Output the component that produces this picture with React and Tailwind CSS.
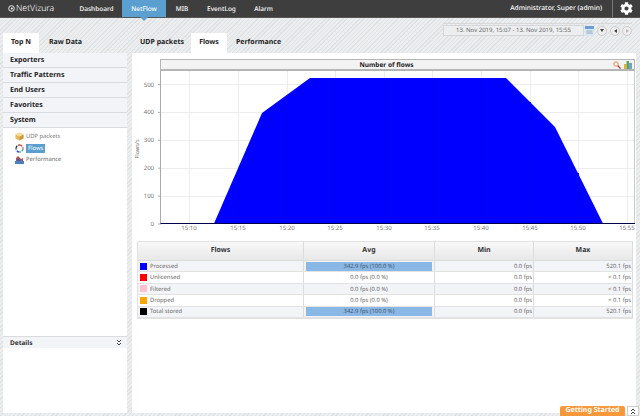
import React from "react";
import { FaCog } from "react-icons/fa";

const stripes = "bg-[repeating-linear-gradient(135deg,#dfe3e6_0,#dfe3e6_1px,#ebedef_1px,#ebedef_3px)]";

function NavItem({ label, active, className }) {
  return (
    <div className={`relative h-full flex items-center justify-center whitespace-nowrap text-[6.5px] font-medium text-white ${active ? "bg-[#5a9fd0]" : ""} ${className}`}>
      {label}
      {active && <div className="absolute left-1/2 top-full -ml-[4px] w-0 h-0 border-x-[4px] border-x-transparent border-t-[4px] border-t-[#5a9fd0]" />}
    </div>
  );
}

function Tab({ label, active, className }) {
  return (
    <div className={`h-[20px] flex items-center justify-center whitespace-nowrap text-[7px] font-bold text-[#222] ${active ? "bg-white" : ""} ${className}`}>
      {label}
    </div>
  );
}

function Acc({ label }) {
  return (
    <div className="h-[15px] flex items-center pl-[7px] bg-[#f3f4f8] border-b border-[#d9dbde] whitespace-nowrap text-[7.1px] font-bold text-[#222]">
      {label}
    </div>
  );
}

function Chart() {
  const ys = [84, 112, 140, 168, 196];
  const xs = [189, 238, 287, 335, 384, 432, 481, 530, 578, 627];
  const xl = ["15:10", "15:15", "15:20", "15:25", "15:30", "15:35", "15:40", "15:45", "15:50", "15:55"];
  const inner = [[238, 168], [287, 95], [335, 78], [384, 78], [432, 78], [481, 78], [530, 102], [578, 173]];
  return (
    <svg width="508" height="168" viewBox="132 71 508 168" className="block">
      {ys.map((y) => <line key={y} x1="160" x2="634" y1={y + 0.5} y2={y + 0.5} stroke="#ececec" />)}
      {xs.map((x) => <line key={x} x1={x + 0.5} x2={x + 0.5} y1="71" y2="223" stroke="#ececec" />)}
      <polygon points="214,223.500 262,113 310,78 506,78 555,127 603,223.500" fill="#0000ff" />
      {inner.map(([x, y]) => <line key={x} x1={x + 0.5} x2={x + 0.5} y1={y} y2="223" stroke="#0000ee" />)}
      <line x1="160.500" x2="160.500" y1="71" y2="224" stroke="#aaa" />
      <line x1="634.500" x2="634.500" y1="71" y2="224" stroke="#ccc" />
      <line x1="160" x2="635" y1="223.500" y2="223.500" stroke="#00004a" />
      {[500, 400, 300, 200, 100, 0].map((v, i) => (
        <g key={v}>
          <line x1="158" x2="161" y1={84.5 + i * 27.9} y2={84.5 + i * 27.9} stroke="#aaa" />
          <text x="154" y={86.5 + i * 27.9} textAnchor="end" fontSize="6" fill="#777">{v}</text>
        </g>
      ))}
      {xs.map((x, i) => (
        <text key={x} x={x} y="230" textAnchor="middle" fontSize="6" fill="#777">{xl[i]}</text>
      ))}
      <text x="139" y="149" fontSize="5.5" fill="#777" textAnchor="middle" transform="rotate(-90 139 149)">Flows/s</text>
    </svg>
  );
}

const rows = [
  ["#0000ff", "Processed", "342.9 fps (100.0 %)", "0.0 fps", "520.1 fps", true],
  ["#ff0000", "Unlicensed", "0.0 fps (0.0 %)", "0.0 fps", "< 0.1 fps", false],
  ["#ffc0cb", "Filtered", "0.0 fps (0.0 %)", "0.0 fps", "< 0.1 fps", false],
  ["#ffa500", "Dropped", "0.0 fps (0.0 %)", "0.0 fps", "< 0.1 fps", false],
  ["#000000", "Total stored", "342.9 fps (100.0 %)", "0.0 fps", "520.1 fps", true],
];

function Header({ children, className }) {
  return (
    <div className={`flex items-center justify-center bg-gradient-to-b from-[#f8f8f8] to-[#e8e8e8] border-r border-[#dcdcdc] text-[7px] font-bold text-[#333] ${className}`}>
      {children}
    </div>
  );
}

function Table() {
  return (
    <div className="ml-[5px] mt-[2px] w-[496px] border border-[#e2e2e2] border-r-0 text-[5.8px] text-[#666]">
      <div className="flex h-[19px] border-b border-[#dcdcdc]">
        <Header className="w-[166px]">Flows</Header>
        <Header className="w-[131px]">Avg</Header>
        <Header className="w-[99px]">Min</Header>
        <Header className="w-[99px]">Max</Header>
      </div>
      {rows.map(([c, n, avg, min, max, bar], i) => (
        <div key={n} className={`flex h-[11.4px] border-b border-[#e2e2e2] ${i % 2 === 0 ? "bg-[#f3f4f8]" : "bg-white"}`}>
          <div className="w-[166px] flex items-center border-r border-[#dcdcdc] pl-[2px] gap-[3px]">
            <div className="w-[7px] h-[7px]" style={{ background: c }} />
            <span>{n}</span>
          </div>
          <div className="w-[131px] flex items-center border-r border-[#dcdcdc] px-[2px]">
            <div className={`w-full h-[9px] flex items-center justify-center ${bar ? "bg-[#8ab8e6] text-[#456]" : ""}`}>{avg}</div>
          </div>
          <div className="w-[99px] flex items-center justify-end pr-[1px] border-r border-[#dcdcdc]">{min}</div>
          <div className="w-[99px] flex items-center justify-end pr-[1px] border-r border-[#dcdcdc]">{max}</div>
        </div>
      ))}
    </div>
  );
}

export default function App() {
  return (
    <div className={`w-[640px] h-[416px] overflow-hidden flex flex-col [text-rendering:geometricPrecision] font-['Liberation_Sans',Arial,sans-serif] ${stripes}`}>
      <div className="h-[17px] bg-[#3e3e3e] flex items-center text-white border-b border-[#555] box-content">
        <div className="w-[80px] pl-[8px] flex items-center gap-[1px] h-full">
          <svg width="7" height="7" viewBox="0 0 7 7"><circle cx="3.500" cy="3.500" r="2.800" fill="none" stroke="#fff" strokeWidth="0.9" /><circle cx="3.800" cy="3.500" r="1" fill="#fff" /></svg>
          <span className="text-[8.7px] font-['Open_Sans',sans-serif] font-light">NetVizura</span>
        </div>
        <NavItem label="Dashboard" className="w-[33px]" />
        <NavItem label="NetFlow" active className="ml-[9px] w-[44px]" />
        <NavItem label="MIB" className="ml-[10px] w-[12px]" />
        <NavItem label="EventLog" className="ml-[19px] w-[29px]" />
        <NavItem label="Alarm" className="ml-[18px] w-[19px]" />
        <div className="ml-auto text-[6.7px] font-medium whitespace-nowrap">Administrator, Super (admin)</div>
        <div className="ml-[10px] h-full w-[28px] border-l border-[#777] flex items-center justify-center">
          <FaCog className="w-[13px] h-[13px] text-white" />
        </div>
      </div>

      <div className="relative flex-1 flex min-h-0">
        <div className="ml-[3px] w-[124px] flex flex-col">
          <div className="mt-[15px] flex">
            <Tab label="Top N" active className="w-[36px]" />
            <Tab label="Raw Data" className="ml-[10px] w-[33px]" />
          </div>
          <div className="flex-1 mb-[3px] bg-white flex flex-col">
            <Acc label="Exporters" />
            <Acc label="Traffic Patterns" />
            <Acc label="End Users" />
            <Acc label="Favorites" />
            <Acc label="System" />
            <div className="pl-[12px] pt-[3px] flex flex-col text-[5.8px] text-[#666]">
              <div className="h-[11.5px] flex items-center gap-[2px]">
                <svg width="9" height="9" viewBox="0 0 9 9"><path d="M4.500.5 8.500 2.500v4l-4 2-4-2v-4z" fill="#e8b860" /><path d="M4.500 4.500 8.500 2.500v4l-4 2z" fill="#d09a3a" /><path d="M.5 2.500l4-2 4 2-4 2z" fill="#f6dca0" /></svg>
                <span className="text-[#777]">UDP packets</span>
              </div>
              <div className="h-[11.5px] flex items-center gap-[2px]">
                <svg width="9" height="9" viewBox="0 0 9 9" fill="none" strokeWidth="1.300" strokeDasharray="3 1"><path d="M1 4.500A3.500 3.500 0 0 1 4.500 1" stroke="#223" /><path d="M4.500 1A3.500 3.500 0 0 1 8 4.500" stroke="#e33" /><path d="M8 4.500A3.500 3.500 0 0 1 4.500 8" stroke="#2a8" /><path d="M4.500 8A3.500 3.500 0 0 1 1 4.500" stroke="#35c" /></svg>
                <span className="bg-[#5a9fd0] text-white px-[2px] h-[9px] flex items-center">Flows</span>
              </div>
              <div className="h-[11.5px] flex items-center gap-[2px]">
                <svg width="9" height="9" viewBox="0 0 9 9"><rect x="0" y="6" width="9" height="3" fill="#4a7fc0" /><path d="M1 6V3l2-2 2 2 1 1 2-1v3z" fill="#c0504d" /><path d="M2 6V4l2-1 2 3z" fill="#3a62a8" /></svg>
                <span>Performance</span>
              </div>
            </div>
            <div className="mt-auto mb-[65px] h-[12px] bg-[#f3f4f8] border-t border-[#d9dbde] flex items-center justify-between pl-[7px] pr-[5px] text-[6.5px] font-bold text-[#333]">
              <span>Details</span>
              <svg width="6" height="7" viewBox="0 0 6 7" fill="none" stroke="#444"><path d="M1 1 3 3 5 1M1 4 3 6 5 4" /></svg>
            </div>
          </div>
        </div>

        <div className="ml-[5px] w-[504px] flex flex-col">
          <div className="h-[35px] flex items-end relative">
            <Tab label="UDP packets" className="ml-[9px] w-[42px]" />
            <Tab label="Flows" active className="ml-[8px] w-[36px]" />
            <Tab label="Performance" className="ml-[11px] w-[41px]" />
            <div className="absolute right-[4px] top-[5px] flex items-center border-t border-[#d6d8da] pt-[1px]">
              <div className="w-[141px] h-[11px] bg-[#eceef0] border border-[#d4d6d8] flex items-center justify-center whitespace-nowrap text-[6px] text-[#666]">
                13. Nov 2019, 15:07 - 13. Nov 2019, 15:55
              </div>
              <svg className="ml-[1px]" width="9" height="10" viewBox="0 0 9 10"><rect x="0" y="0" width="9" height="10" fill="#d5e6f5" /><rect x="0" y="0" width="9" height="3" fill="#6aa0d0" /><path d="M1.500 5h6M1.500 7h6" stroke="#9ab" /></svg>
              <span className="ml-[3px] w-[10px] h-[10px] rounded-full bg-[#eee] border border-[#ccc] flex items-center justify-center"><span className="w-0 h-0 border-x-[2.5px] border-x-transparent border-t-[3px] border-t-[#444]" /></span>
              <span className="ml-[3px] w-[10px] h-[10px] rounded-full bg-[#eee] border border-[#ccc] flex items-center justify-center"><span className="w-0 h-0 border-y-[2.5px] border-y-transparent border-r-[3px] border-r-[#444]" /></span>
              <span className="ml-[2px] w-[10px] h-[10px] rounded-full bg-[#eee] border border-[#ccc] flex items-center justify-center"><span className="w-0 h-0 border-y-[2.5px] border-y-transparent border-l-[3px] border-l-[#bbb]" /></span>
            </div>
          </div>
          <div className="flex-1 mb-[3px] bg-white">
            <div className="mt-[6px] ml-[28px] w-[475px] h-[12px] pr-[22px] bg-[#f3f3f3] border-2 border-[#b5b5b5] border-x-[1px] border-t-[1px] relative flex items-center justify-center whitespace-nowrap text-[6.5px] font-bold text-[#222]">
              Number of flows
              <svg className="absolute right-[13px] top-[1px]" width="8" height="8" viewBox="0 0 8 8" fill="none"><circle cx="3" cy="3" r="2.200" stroke="#d98a50" /><path d="M4.800 4.800 7.500 7.500" stroke="#c33" strokeWidth="1.300" /></svg>
              <svg className="absolute right-[2px] top-[1px]" width="8" height="8" viewBox="0 0 8 8"><rect x="0" y="3" width="2.500" height="5" fill="#e0b040" /><rect x="2.500" y="0" width="2.500" height="8" fill="#5aaa50" /><rect x="5" y="2" width="3" height="6" fill="#70a0d8" /></svg>
            </div>
            <Chart />
            <Table />
          </div>
        </div>

        <div className="absolute right-[15px] bottom-0 w-[65px] h-[10px] bg-[#f9983a] rounded-t-[2px] flex items-center justify-center whitespace-nowrap text-[7px] font-bold text-white">
          Getting Started
        </div>
        <div className="absolute right-[1px] bottom-0 w-[12px] h-[10px] bg-white border border-[#ccc] flex items-center justify-center">
          <svg width="6" height="7" viewBox="0 0 6 7" fill="none" stroke="#444"><path d="M1 3 3 1 5 3M1 6 3 4 5 6" /></svg>
        </div>
      </div>
    </div>
  );
}
